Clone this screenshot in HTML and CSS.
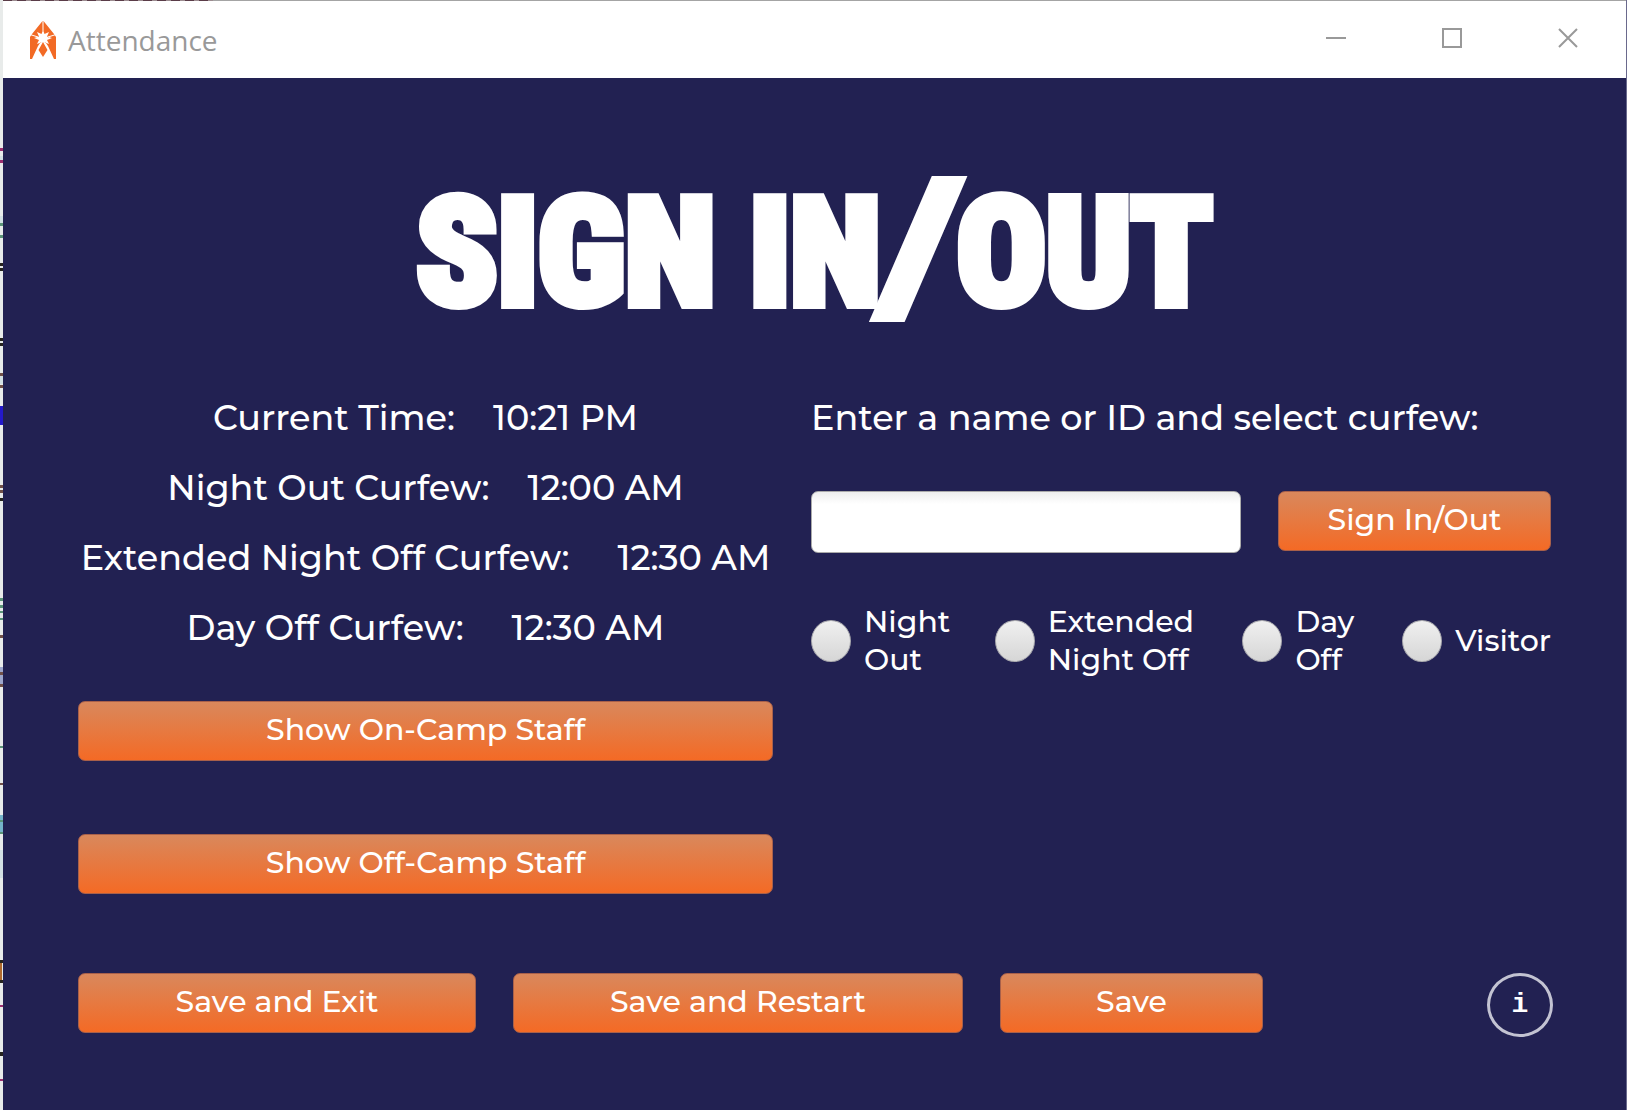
FILE: index.html
```html
<!DOCTYPE html>
<html lang="en">
<head>
<meta charset="utf-8">
<title>Attendance</title>
<link rel="stylesheet" href="styles.css">
</head>
<body>
<svg class="backdrop" viewBox="0 0 3 1110" preserveAspectRatio="xMinYMin slice" aria-hidden="true">
  <path fill="#d3e0e4" d="M0 156h3v4H0zM0 216h3v8H0zM0 376h3v8H0zM0 850h3v28H0z"/>
  <path fill="#9da6cc" d="M0 667h3v18H0z"/>
  <path fill="#75b4ca" d="M0 815h3v18H0z"/>
  <path fill="#9c2f70" d="M0 148h3v3H0zM0 160h3v3H0zM0 1005h3v2H0zM0 1079h3v2H0z"/>
  <path fill="#5b9478" d="M0 223h3v3H0zM0 235h3v3H0zM0 598h3v3H0zM0 605h3v3H0zM0 611h3v2H0zM0 618h3v2H0zM0 746h3v2H0zM0 820h3v2H0zM0 832h3v2H0z"/>
  <path fill="#26241f" d="M0 263h3v3H0zM0 268h3v3H0zM0 338h3v3H0zM0 343h3v3H0zM0 498h3v3H0zM0 960h3v3H0zM0 980h3v3H0zM0 1052h3v4H0z"/>
  <path fill="#705048" d="M0 373h3v3H0zM0 385h3v3H0zM0 485h3v3H0zM0 490h3v3H0zM0 635h3v3H0zM0 672h3v3H0zM0 684h3v3H0zM0 783h3v2H0z"/>
  <path fill="#2419cc" d="M0 406h3v19H0z"/>
  <path fill="#b06a2e" d="M0 963h2v17H0z"/>
</svg>
<div class="window">
  <header class="titlebar">
    <svg class="app-icon" viewBox="0 0 26 38" aria-hidden="true">
      <path fill="#f26a25" d="M12.500 0 2 13 0 16V38H2L8 25 10 22H16L18 25 24 38H26V16L24 13 13.500 0Z"/>
      <path fill="#fff" d="m13 9 1.500 4 4.500-2-2 4.500 5 1.500-5 2 2 4-4-1.500L13 25l-2-3.500L7 23l2-4-5-2 5-1.500L7 11l4.500 2zM12.500 0h1v11h-1zM0 13l8 2.500v1L0 14zM26 13l-8 2.500v1l8-2.500z"/>
      <path fill="#f26a25" d="m13 21 4.500 8-4.500 7-4.500-7Z"/>
    </svg>
    <span class="app-name">Attendance</span>
    <div class="window-controls">
      <button type="button" class="window-button" aria-label="Minimize"><svg viewBox="0 0 20 20"><path d="M0 10h20"/></svg></button>
      <button type="button" class="window-button" aria-label="Maximize"><svg viewBox="0 0 20 20"><path d="M1 1h18v18H1z"/></svg></button>
      <button type="button" class="window-button" aria-label="Close"><svg viewBox="0 0 20 20"><path d="m1 1 18 18M19 1 1 19"/></svg></button>
    </div>
  </header>
  <main class="content">
    <h1 class="heading">SIGN IN<span class="slash">/</span>OUT</h1>
    <div class="columns">
      <section class="column">
        <dl class="times">
          <div class="time"><dt>Current Time:</dt><dd>10:21 PM</dd></div>
          <div class="time"><dt>Night Out Curfew:</dt><dd>12:00 AM</dd></div>
          <div class="time time-wide"><dt>Extended Night Off Curfew:</dt><dd>12:30 AM</dd></div>
          <div class="time time-wide"><dt>Day Off Curfew:</dt><dd>12:30 AM</dd></div>
        </dl>
        <div class="lists">
          <button type="button" class="button">Show On-Camp Staff</button>
          <button type="button" class="button">Show Off-Camp Staff</button>
        </div>
      </section>
      <form class="column">
        <label class="prompt" for="person">Enter a name or ID and select curfew:</label>
        <div class="entry">
          <input class="field" id="person" type="text">
          <button type="button" class="button">Sign In/Out</button>
        </div>
        <div class="choices">
          <label class="choice"><input type="radio" name="curfew"><span>Night<br>Out</span></label>
          <label class="choice"><input type="radio" name="curfew"><span>Extended<br>Night Off</span></label>
          <label class="choice"><input type="radio" name="curfew"><span>Day<br>Off</span></label>
          <label class="choice"><input type="radio" name="curfew"><span>Visitor</span></label>
        </div>
      </form>
    </div>
    <footer class="actions">
      <button type="button" class="button">Save and Exit</button>
      <button type="button" class="button">Save and Restart</button>
      <button type="button" class="button">Save</button>
      <button type="button" class="info">i</button>
    </footer>
  </main>
</div>
</body>
</html>
```
FILE: styles.css
```css
* { box-sizing: border-box; }

body {
  margin: 0;
  min-height: 100vh;
  display: flex;
  background: #e8ebea;
  color: #fff;
  font-family: Montserrat, Inter, sans-serif;
  font-weight: 500;
}

button, input { font: inherit; color: inherit; }

.backdrop { width: 3px; height: 100vh; flex: none; }

.window {
  flex: 1;
  display: flex;
  flex-direction: column;
  border-right: 1px solid #6a698c;
  background: #222152;
}

.window::before {
  content: "";
  height: 1px;
  background:
    repeating-linear-gradient(90deg, #5a3c48 0 9px, #9c8c90 9px 14px) 0 0 / 210px 1px no-repeat,
    #a4a4a4;
}

.titlebar {
  display: flex;
  align-items: center;
  height: 77px;
  padding-left: 27px;
  background: #fff;
  color: #999;
}

.app-icon { width: 26px; height: 38px; }

.app-name {
  margin-left: 12px;
  font: 28px/40px "Open Sans", sans-serif;
}

.window-controls { display: flex; margin-left: auto; }

.window-button {
  width: 116px;
  height: 76px;
  padding: 0 0 4px;
  border: 0;
  background: none;
}

.window-button svg {
  width: 20px;
  height: 20px;
  fill: none;
  stroke: #999;
  stroke-width: 2;
  vertical-align: middle;
}

.content { padding: 96px 75px 72px; }

.heading {
  margin: 0;
  font: 800 148px/160px "Roboto Condensed", Roboto, sans-serif;
  text-align: center;
  -webkit-text-stroke: 10px #fff;
}

.slash {
  margin: 0 12px 0 12px;
  font-size: 168px;
  font-style: italic;
  line-height: 1px;
  -webkit-text-stroke-width: 16px;
}

.columns {
  display: grid;
  grid-template-columns: 695fr 740fr;
  gap: 38px;
  margin-top: 49px;
}

.times { margin: 0; font-size: 35px; line-height: 70px; }

.time { display: flex; justify-content: center; gap: 38px; }

.time-wide { gap: 48px; }

.time dd { margin: 0; }

.lists { display: grid; gap: 73px; margin-top: 38px; }

.button {
  height: 60px;
  padding: 0 0 4px;
  border: 1px solid #a8604a;
  border-radius: 7px;
  background: linear-gradient(#d9885c, #f46a25);
  font-size: 30px;
}

.prompt { display: block; font-size: 35px; line-height: 70px; }

.entry {
  display: grid;
  grid-template-columns: 430fr 273fr;
  gap: 37px;
  margin-top: 38px;
}

.field {
  width: 100%;
  height: 62px;
  padding: 0 16px;
  border: 1px solid #aaa;
  border-radius: 7px;
  background: linear-gradient(#eee, #fff 12px);
  color: #222;
  font-size: 30px;
}

.choices {
  display: grid;
  grid-template-columns: 184fr 248fr 160fr 148fr;
  align-items: center;
  margin-top: 50px;
  font-size: 30px;
  line-height: 38px;
}

.choice { display: flex; align-items: center; gap: 13px; }

.choice input {
  appearance: none;
  width: 40px;
  height: 42px;
  margin: 0;
  flex: none;
  border: 1px solid #a9a9ae;
  border-radius: 50%;
  background: linear-gradient(#f0f0f0, #d6d6d6);
}

.actions {
  display: grid;
  grid-template-columns: 398fr 450fr 263fr 253fr;
  gap: 37px;
  margin: 79px -2px 0 0;
}

.info {
  width: 66px;
  height: 64px;
  padding: 0;
  justify-self: end;
  border: 3px solid #c3c3d2;
  border-radius: 50%;
  background: none;
  font: bold 28px/40px "Liberation Mono", monospace;
}
```
